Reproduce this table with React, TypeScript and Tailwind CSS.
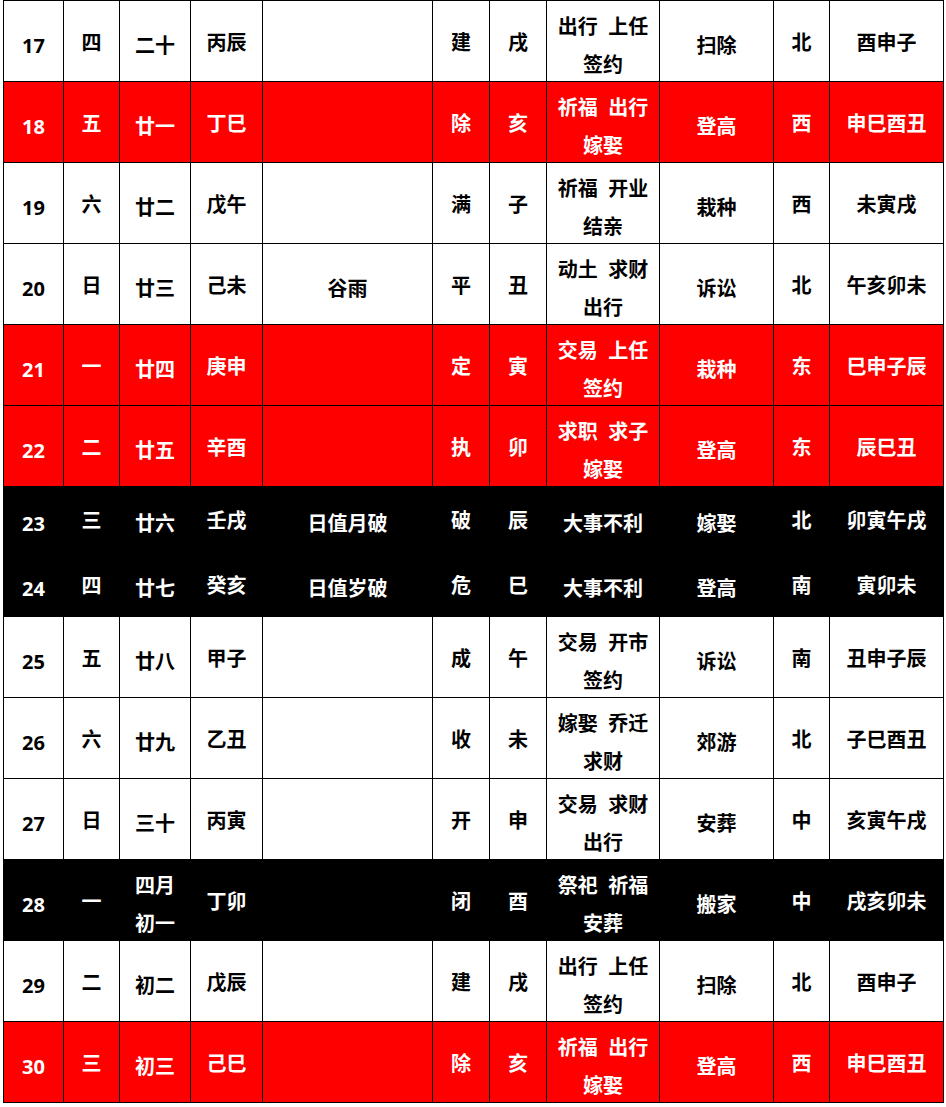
import React from 'react';

type Tone = 'white' | 'red' | 'black';

type Row = {
  day: string;
  week: string;
  lunar: string[];
  ganzhi: string;
  term: string;
  jianchu: string;
  zhi: string;
  yi: string[];
  ji: string;
  dir: string;
  hours: string;
  tone: Tone;
  short?: boolean;
};

const rows: Row[] = [
  { day: '17', week: '四', lunar: ['二十'], ganzhi: '丙辰', term: '', jianchu: '建', zhi: '戌', yi: ['出行  上任', '签约'], ji: '扫除', dir: '北', hours: '酉申子', tone: 'white' },
  { day: '18', week: '五', lunar: ['廿一'], ganzhi: '丁巳', term: '', jianchu: '除', zhi: '亥', yi: ['祈福  出行', '嫁娶'], ji: '登高', dir: '西', hours: '申巳酉丑', tone: 'red' },
  { day: '19', week: '六', lunar: ['廿二'], ganzhi: '戊午', term: '', jianchu: '满', zhi: '子', yi: ['祈福  开业', '结亲'], ji: '栽种', dir: '西', hours: '未寅戌', tone: 'white' },
  { day: '20', week: '日', lunar: ['廿三'], ganzhi: '己未', term: '谷雨', jianchu: '平', zhi: '丑', yi: ['动土  求财', '出行'], ji: '诉讼', dir: '北', hours: '午亥卯未', tone: 'white' },
  { day: '21', week: '一', lunar: ['廿四'], ganzhi: '庚申', term: '', jianchu: '定', zhi: '寅', yi: ['交易  上任', '签约'], ji: '栽种', dir: '东', hours: '巳申子辰', tone: 'red' },
  { day: '22', week: '二', lunar: ['廿五'], ganzhi: '辛酉', term: '', jianchu: '执', zhi: '卯', yi: ['求职  求子', '嫁娶'], ji: '登高', dir: '东', hours: '辰巳丑', tone: 'red' },
  { day: '23', week: '三', lunar: ['廿六'], ganzhi: '壬戌', term: '日值月破', jianchu: '破', zhi: '辰', yi: ['大事不利'], ji: '嫁娶', dir: '北', hours: '卯寅午戌', tone: 'black', short: true },
  { day: '24', week: '四', lunar: ['廿七'], ganzhi: '癸亥', term: '日值岁破', jianchu: '危', zhi: '巳', yi: ['大事不利'], ji: '登高', dir: '南', hours: '寅卯未', tone: 'black', short: true },
  { day: '25', week: '五', lunar: ['廿八'], ganzhi: '甲子', term: '', jianchu: '成', zhi: '午', yi: ['交易  开市', '签约'], ji: '诉讼', dir: '南', hours: '丑申子辰', tone: 'white' },
  { day: '26', week: '六', lunar: ['廿九'], ganzhi: '乙丑', term: '', jianchu: '收', zhi: '未', yi: ['嫁娶  乔迁', '求财'], ji: '郊游', dir: '北', hours: '子巳酉丑', tone: 'white' },
  { day: '27', week: '日', lunar: ['三十'], ganzhi: '丙寅', term: '', jianchu: '开', zhi: '申', yi: ['交易  求财', '出行'], ji: '安葬', dir: '中', hours: '亥寅午戌', tone: 'white' },
  { day: '28', week: '一', lunar: ['四月', '初一'], ganzhi: '丁卯', term: '', jianchu: '闭', zhi: '酉', yi: ['祭祀  祈福', '安葬'], ji: '搬家', dir: '中', hours: '戌亥卯未', tone: 'black' },
  { day: '29', week: '二', lunar: ['初二'], ganzhi: '戊辰', term: '', jianchu: '建', zhi: '戌', yi: ['出行  上任', '签约'], ji: '扫除', dir: '北', hours: '酉申子', tone: 'white' },
  { day: '30', week: '三', lunar: ['初三'], ganzhi: '己巳', term: '', jianchu: '除', zhi: '亥', yi: ['祈福  出行', '嫁娶'], ji: '登高', dir: '西', hours: '申巳酉丑', tone: 'red' },
];

const toneClass: Record<Tone, string> = {
  white: 'bg-white text-black',
  red: 'bg-[#ff0000] text-white',
  black: 'bg-black text-white',
};

// low: text sits a bit lower in the cell, otherwise only slightly
const Cell = ({ lines, low }: { lines: string[]; low?: boolean }) => (
  <td className="border border-black p-0 text-center align-middle">
    <div className={low ? 'translate-y-[5px]' : 'translate-y-[2px]'}>
      {lines.map((l, i) => (
        <div key={i} className="whitespace-pre leading-[38px]">
          {l}
        </div>
      ))}
    </div>
  </td>
);

export default function App() {
  return (
    <div className="bg-white pl-[3px] w-[946px] h-[1107px]">
      <table
        className="table-fixed border-collapse w-[940px] text-[20px] font-bold"
        style={{ fontFamily: '"Open Sans", "Noto Sans CJK SC", sans-serif' }}
      >
        <colgroup>
          <col className="w-[60px]" />
          <col className="w-[56px]" />
          <col className="w-[71px]" />
          <col className="w-[72px]" />
          <col className="w-[170px]" />
          <col className="w-[57px]" />
          <col className="w-[57px]" />
          <col className="w-[113px]" />
          <col className="w-[114px]" />
          <col className="w-[56px]" />
          <col className="w-[114px]" />
        </colgroup>
        <tbody>
          {rows.map((r) => (
            <tr key={r.day} className={`${toneClass[r.tone]} ${r.short ? 'h-[65px]' : 'h-[81px]'}`}>
              <Cell lines={[r.day]} low />
              <Cell lines={[r.week]} />
              <Cell lines={r.lunar} low />
              <Cell lines={[r.ganzhi]} />
              <Cell lines={[r.term]} low />
              <Cell lines={[r.jianchu]} />
              <Cell lines={[r.zhi]} />
              <Cell lines={r.yi} low />
              <Cell lines={[r.ji]} low />
              <Cell lines={[r.dir]} />
              <Cell lines={[r.hours]} />
            </tr>
          ))}
        </tbody>
      </table>
    </div>
  );
}
